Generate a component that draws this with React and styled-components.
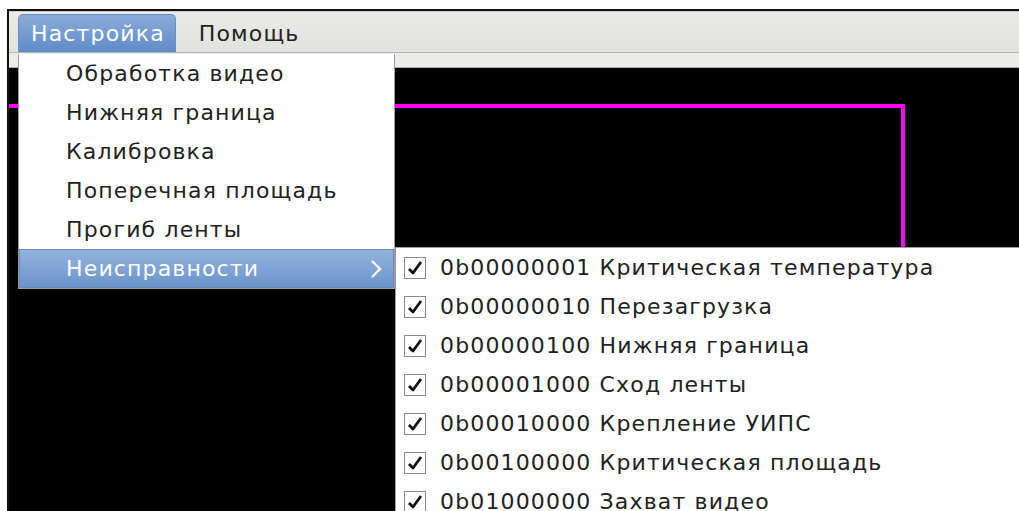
import React from 'react';
import styled, { createGlobalStyle } from 'styled-components';

const GlobalStyle = createGlobalStyle`
    html, body {
        margin: 0;
        padding: 0;
        background: #fff;
        overflow: hidden;
    }
    body {
        font-family: 'DejaVu Sans', 'Liberation Sans', sans-serif;
        letter-spacing: 1.15px;
    }
`;

const Page = styled.div`
    width: 1019px;
    height: 511px;
    padding: 9px 0 0 7px;
    box-sizing: border-box;
    display: flex;
    flex-direction: column;
`;

const Window = styled.div`
    position: relative;
    flex: 1;
    display: flex;
    flex-direction: column;
    border-top: 2px solid #111;
    border-left: 2px solid #111;
    background: #ededeb;
`;

const MenuBar = styled.div`
    height: 42px;
    display: flex;
    align-items: flex-end;
    padding-left: 9px;
    background: linear-gradient(#eaeae8, #e2e2e0);
    border-top: 1px solid #c9c9c7;
    border-bottom: 1px solid #b4b4b2;
    box-sizing: border-box;
`;

const MenuTitle = styled.div`
    height: 38px;
    display: flex;
    align-items: center;
    padding: 0 10px 0 12px;
    font-size: 22px;
    box-sizing: border-box;
    color: ${(p) => (p.$open ? '#fff' : '#222')};
    border-radius: 5px 5px 0 0;
    border: 1px solid ${(p) => (p.$open ? '#6b8fc4' : 'transparent')};
    border-bottom: none;
    background: ${(p) => (p.$open ? 'linear-gradient(#8aacd9, #5f8bc9)' : 'transparent')};
    margin-right: ${(p) => (p.$open ? '10px' : '0')};
`;

const ToolStrip = styled.div`
    height: 14px;
    background: #ececea;
    border-bottom: 1px solid #a9a9a7;
`;

const Canvas = styled.div`
    flex: 1;
    background: #000;
    position: relative;

    svg {
        display: block;
    }
`;

const Dropdown = styled.div`
    position: absolute;
    left: 9px;
    top: 43px;
    width: 377px;
    background: #fff;
    border: 1px solid #9d9d9d;
    border-top: none;
    box-sizing: border-box;
    z-index: 10;
`;

const Item = styled.div`
    position: relative;
    height: 39px;
    display: flex;
    align-items: center;
    padding-left: 47px;
    font-size: 22px;
    color: ${(p) => (p.$active ? '#fff' : '#222')};
    background: ${(p) => (p.$active ? 'linear-gradient(#95b4de, #6a93cc)' : 'transparent')};
    box-shadow: ${(p) => (p.$active ? 'inset 0 0 0 1px #6689bd' : 'none')};
`;

const Chevron = styled.svg`
    position: absolute;
    right: 12px;
    top: 10px;
`;

const Submenu = styled.div`
    position: absolute;
    left: 386px;
    top: 236px;
    right: -20px;
    background: #fff;
    border: 1px solid #9d9d9d;
    border-right: none;
    z-index: 11;
`;

const CheckRow = styled.div`
    height: 39px;
    display: flex;
    align-items: center;
    padding-left: 8px;
    gap: 14px;
    font-size: 22px;
    color: #222;
    white-space: nowrap;
`;

const Box = styled.span`
    width: 20px;
    height: 20px;
    border: 1px solid #8a8a8a;
    background: #fff;
    display: flex;
    align-items: center;
    justify-content: center;
    flex-shrink: 0;
`;

const settingsItems = [
    'Обработка видео',
    'Нижняя граница',
    'Калибровка',
    'Поперечная площадь',
    'Прогиб ленты',
];

const faults = [
    ['0b00000001', 'Критическая температура'],
    ['0b00000010', 'Перезагрузка'],
    ['0b00000100', 'Нижняя граница'],
    ['0b00001000', 'Сход ленты'],
    ['0b00010000', 'Крепление УИПС'],
    ['0b00100000', 'Критическая площадь'],
    ['0b01000000', 'Захват видео'],
];

const Check = () => (
    <svg width="16" height="14" viewBox="0 0 16 14">
        <path d="M2 8 L6 12 L14 1" fill="none" stroke="#111" strokeWidth="2.8" strokeLinejoin="round" />
    </svg>
);

export default function App() {
    return (
        <Page>
            <GlobalStyle />
            <Window>
                <MenuBar>
                    <MenuTitle $open>Настройка</MenuTitle>
                    <MenuTitle>Помощь</MenuTitle>
                </MenuBar>
                <ToolStrip />
                <Canvas>
                    {/* контур зоны на кадре */}
                    <svg width="1010" height="440">
                        <polyline points="0,38 894,38 894,440" fill="none" stroke="#ff00ff" strokeWidth="4" />
                    </svg>
                </Canvas>

                <Dropdown>
                    {settingsItems.map((t) => (
                        <Item key={t}>{t}</Item>
                    ))}
                    <Item $active>
                        Неисправности
                        <Chevron width="12" height="20" viewBox="0 0 12 20">
                            <path d="M2 2 L10 10 L2 18" fill="none" stroke="#fff" strokeWidth="2.4" />
                        </Chevron>
                    </Item>
                </Dropdown>

                <Submenu>
                    {faults.map(([code, name]) => (
                        <CheckRow key={code}>
                            <Box><Check /></Box>
                            <span>{code} {name}</span>
                        </CheckRow>
                    ))}
                </Submenu>
            </Window>
        </Page>
    );
}
